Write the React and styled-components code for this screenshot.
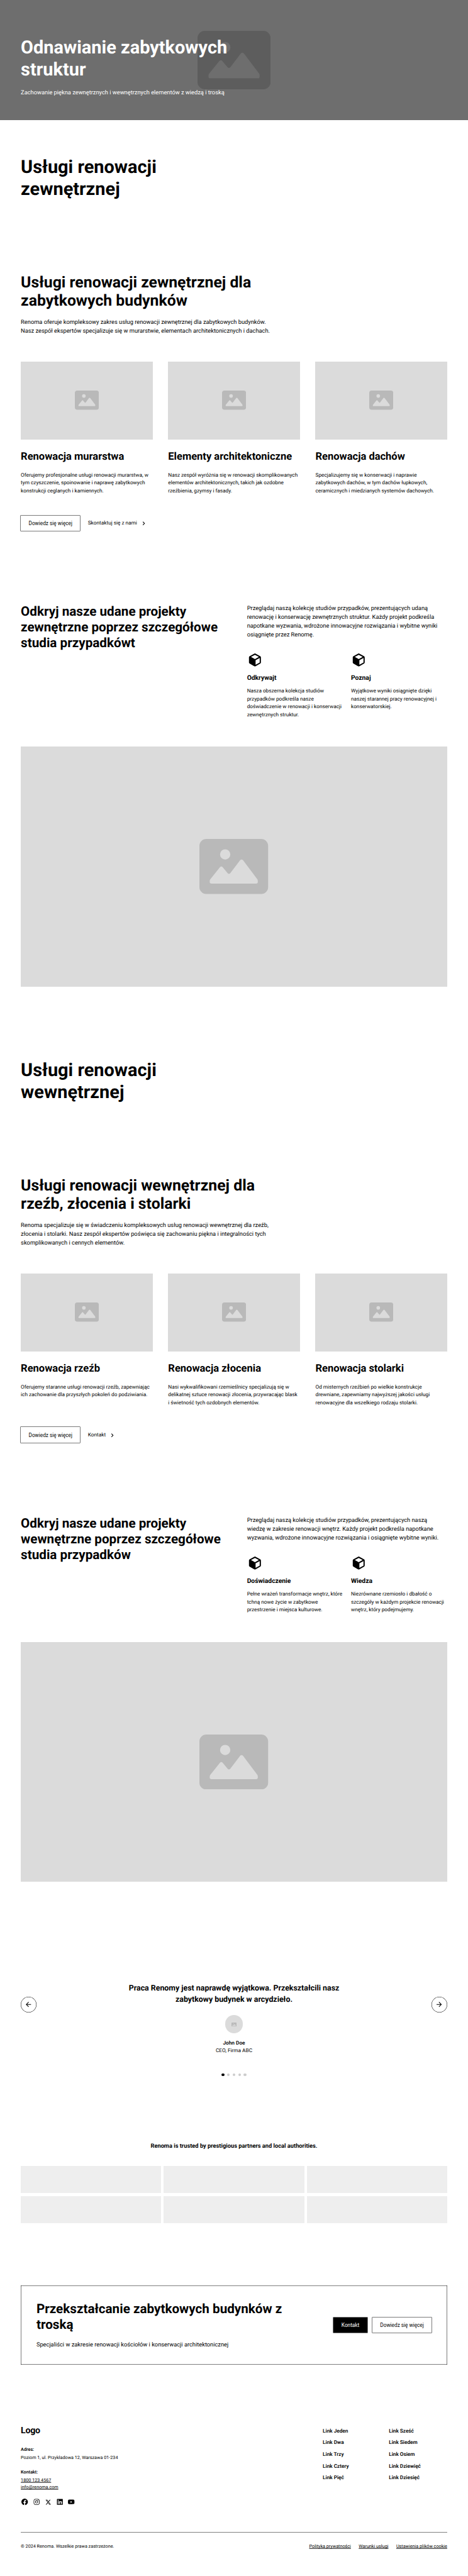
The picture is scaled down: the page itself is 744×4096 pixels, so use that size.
import React from "react";
import styled, { createGlobalStyle, css } from "styled-components";
import {
  BiChevronRight,
  BiLogoFacebookCircle,
  BiLogoInstagram,
  BiLogoLinkedinSquare,
  BiLogoYoutube,
} from "react-icons/bi";
import { FaXTwitter } from "react-icons/fa6";
import { MdArrowBack, MdArrowForward } from "react-icons/md";

/* Sizes are written in design pixels (1440px artboard) and emitted as rem. */
const u = (...px) => px.map((n) => `${n / 16}rem`).join(" ");

const GlobalStyle = createGlobalStyle`
  *, *::before, *::after { box-sizing: border-box; }
  html { font-size: 8.2654px; background: #fff; }
  body {
    margin: 0;
    overflow-x: hidden;
    color: #000;
    font-family: Roboto, "Liberation Sans", sans-serif;
    text-rendering: geometricPrecision;
  }
  h1, h2, h3, h4, p { margin: 0; }
  a { color: inherit; }
`;

const type = (size, line, weight = 400) => css`
  font-size: ${u(size)};
  line-height: ${u(line)};
  font-weight: ${weight};
  white-space: pre;
`;

const settle = css`
  transform: translateY(0.6px);
`;

const Page = styled.main`
  width: ${u(1440)};
  margin: 0 auto;
  min-height: 100vh;
`;

const DisplayHeading = styled.h1`
  ${type(56, 67.2, 700)}
  ${settle}
`;
const SectionHeading = styled.h2`
  ${type(48, 57.6, 700)}
  ${settle}
`;
const MediumHeading = styled.h2`
  ${type(40, 48, 700)}
  ${settle}
`;
const CardHeading = styled.h3`
  ${type(32, 41.6, 700)}
  ${settle}
`;
const SmallHeading = styled.h4`
  ${type(20, 28, 700)}
  ${settle}
`;
const Lead = styled.p`
  ${type(18, 27)}
  ${settle}
`;
const Body = styled.p`
  ${type(16, 24)}
  ${settle}
`;
const Caption = styled.p`
  ${type(14, 21)}
  ${settle}
`;

/* ---------- Hero ---------- */
const Hero = styled.header`
  display: grid;
  height: ${u(369)};
  background: #6e6e6e;
  color: #fff;
`;
const HeroMedia = styled.div`
  grid-area: 1 / 1;
  display: grid;
  place-items: center;
`;
const HeroContent = styled.div`
  grid-area: 1 / 1;
  z-index: 1;
  display: flex;
  flex-direction: column;
  gap: ${u(24)};
  padding: ${u(112, 64, 0)};
`;

/* ---------- Placeholder picture ---------- */
const PictureSvg = styled.svg`
  display: block;
  width: ${({ $width }) => u($width)};
  height: auto;
  fill: ${({ $tone }) => $tone};
`;
const PictureIcon = ({ width, tone = "#b9b9b9" }) => (
  <PictureSvg $width={width} $tone={tone} viewBox="0 0 20 16">
    <path
      fillRule="evenodd"
      d="M2 0H18A2 2 0 0 1 20 2V14A2 2 0 0 1 18 16H2A2 2 0 0 1 0 14V2A2 2 0 0 1 2 0ZM7.5 3A1.5 1.5 0 1 0 7.5 6A1.5 1.5 0 1 0 7.5 3ZM3.15 11.75L6 8.2Q6.37 7.85 6.75 8.2L8.23 9.98Q8.6 10.32 8.97 9.98L11.85 6.2Q12.27 5.78 12.7 6.2L16.85 11.7Q17 11.92 17 12.2V12.5A.5.5 0 0 1 16.5 13H3.5A.5.5 0 0 1 3 12.5V12.2Q3 11.95 3.15 11.75Z"
    />
  </PictureSvg>
);
const Placeholder = styled.div`
  display: grid;
  place-items: center;
  height: ${({ $height }) => u($height)};
  background: #dbdbdb;
`;

/* ---------- Sections ---------- */
const Section = styled.section`
  padding: ${u(112, 64)};
`;
const Intro = styled.div`
  display: flex;
  flex-direction: column;
  gap: ${u(24)};
  margin-bottom: ${u(80)};
`;
const CardGrid = styled.div`
  display: grid;
  grid-template-columns: repeat(3, minmax(0, 1fr));
  column-gap: ${u(48)};
`;
const Card = styled.article`
  display: flex;
  flex-direction: column;
  ${CardHeading} {
    margin: ${u(32, 0, 24)};
  }
`;
const Actions = styled.div`
  display: flex;
  align-items: center;
  gap: ${u(24)};
  height: ${u(49)};
  margin-top: ${u(64)};
`;
const Button = styled.button`
  ${type(16, 24)}
  height: ${u(48)};
  padding: ${u(0, 24)};
  border: 0;
  font-family: inherit;
  color: ${({ $primary }) => ($primary ? "#fff" : "#000")};
  background: ${({ $primary }) => ($primary ? "#000" : "#fff")};
  box-shadow: 0 0 0 ${u(1)} #000;
`;
const TextLink = styled.a`
  ${type(16, 24)}
  display: inline-flex;
  align-items: center;
  gap: ${u(8)};
  svg {
    width: ${u(24)};
    height: ${u(24)};
  }
`;

const TwoColumns = styled.div`
  display: grid;
  grid-template-columns: repeat(2, minmax(0, 1fr));
  column-gap: ${u(80)};
  margin-bottom: ${u(80)};
`;
const FeatureGrid = styled.div`
  display: grid;
  grid-template-columns: repeat(2, minmax(0, 1fr));
  column-gap: ${u(24)};
  margin-top: ${u(32)};
  padding: ${u(8, 0)};
`;
const Feature = styled.div`
  display: flex;
  flex-direction: column;
  gap: ${u(16)};
`;
const CubeSvg = styled.svg`
  display: block;
  width: ${u(48)};
  height: ${u(48)};
`;
const CubeIcon = () => (
  <CubeSvg viewBox="0 0 48 48">
    <path
      fillRule="evenodd"
      d="M22.2 4.4Q23.8 3.6 25.4 4.4L40.4 12.6Q42.2 13.7 42.2 15.6V32.2Q42.2 34.1 40.4 35.1L25.4 43.4Q23.8 44.2 22.2 43.4L7.2 35.1Q5.4 34.1 5.4 32.2V15.6Q5.4 13.7 7.2 12.6ZM23.8 8.1L11.7 14.6L23.8 21.5L35.9 14.6ZM25.8 24.9V38.9L38.4 31.9V17.9Z"
    />
  </CubeSvg>
);

/* ---------- Testimonial ---------- */
const Testimonial = styled.section`
  padding: ${u(199.6, 64, 0)};
`;
const Carousel = styled.div`
  display: flex;
  align-items: flex-start;
  justify-content: space-between;
`;
const RoundButton = styled.button`
  display: grid;
  place-items: center;
  width: ${u(48)};
  height: ${u(48)};
  margin-top: ${u(42)};
  padding: 0;
  border: 0;
  border-radius: 50%;
  background: #fff;
  color: #000;
  box-shadow: inset 0 0 0 ${u(1)} #000;
  svg {
    width: ${u(24)};
    height: ${u(24)};
  }
`;
const Quote = styled.blockquote`
  display: flex;
  flex-direction: column;
  align-items: center;
  margin: 0;
  text-align: center;
`;
const QuoteText = styled.p`
  ${type(24, 33.6, 700)}
  ${settle}
`;
const Avatar = styled.div`
  display: grid;
  place-items: center;
  width: ${u(56)};
  height: ${u(56)};
  margin: ${u(32, 0, 16)};
  border-radius: 50%;
  background: #dbdbdb;
`;
const Author = styled.p`
  ${type(16, 24, 600)}
  ${settle}
`;
const Dots = styled.div`
  display: flex;
  justify-content: center;
  gap: ${u(9)};
  margin-top: ${u(58.8)};
`;
const Dot = styled.span`
  width: ${u(8)};
  height: ${u(8)};
  border-radius: 50%;
  background: ${({ $active }) => ($active ? "#000" : "#ccc")};
`;

/* ---------- Partners ---------- */
const Partners = styled.section`
  padding: ${u(202.2, 64, 192)};
`;
const PartnersTitle = styled.h4`
  ${type(18, 27, 700)}
  ${settle}
  margin-bottom: ${u(48)};
  text-align: center;
`;
const LogoGrid = styled.div`
  display: grid;
  grid-template-columns: repeat(3, minmax(0, 1fr));
  gap: ${u(8)};
`;
const LogoTile = styled.div`
  height: ${u(84)};
  background: #eee;
`;

/* ---------- Call to action ---------- */
const CallToAction = styled.section`
  display: flex;
  align-items: center;
  justify-content: space-between;
  margin: ${u(0, 64)};
  padding: ${u(48)};
  box-shadow: inset 0 0 0 ${u(1)} #000;
`;
const CallText = styled.div`
  display: flex;
  flex-direction: column;
  gap: ${u(24)};
`;
const CallButtons = styled.div`
  display: flex;
  gap: ${u(16)};
`;

/* ---------- Footer ---------- */
const Footer = styled.footer`
  padding: ${u(192, 64, 80)};
`;
const FooterTop = styled.div`
  display: flex;
  justify-content: space-between;
  margin-bottom: ${u(80)};
`;
const Logo = styled.div`
  ${type(27.5, 23, 700)}
  ${settle}
  letter-spacing: -0.02em;
  margin-bottom: ${u(36)};
`;
const ContactBlock = styled.div`
  display: flex;
  flex-direction: column;
  margin-bottom: ${u(24)};
`;
const ContactLabel = styled.p`
  ${type(14, 21, 600)}
  ${settle}
  margin-bottom: ${u(4)};
`;
const SmallLink = styled.a`
  ${type(14, 21)}
  ${settle}
  align-self: flex-start;
  text-decoration: underline;
`;
const Social = styled.div`
  display: flex;
  gap: ${u(12)};
  svg {
    width: ${u(24)};
    height: ${u(24)};
  }
`;
const XBox = styled.span`
  display: grid;
  place-items: center;
  width: ${u(24)};
  height: ${u(24)};
  && svg {
    width: ${u(18)};
    height: ${u(18)};
  }
`;
const FooterLinks = styled.nav`
  display: grid;
  grid-template-columns: repeat(2, ${u(179.5)});
  column-gap: ${u(24)};
`;
const LinkColumn = styled.div`
  display: flex;
  flex-direction: column;
  gap: ${u(12)};
`;
const FooterLink = styled.a`
  ${type(16, 24, 600)}
  ${settle}
`;
const FooterBottom = styled.div`
  display: flex;
  justify-content: space-between;
  padding-top: ${u(33)};
  box-shadow: inset 0 ${u(1)} 0 #000;
`;
const LegalLinks = styled.div`
  display: flex;
  gap: ${u(24)};
`;

const ServiceSection = ({ title, lead, cards, linkText }) => (
  <Section>
    <Intro>
      <SectionHeading>{title}</SectionHeading>
      <Lead>{lead}</Lead>
    </Intro>
    <CardGrid>
      {cards.map(([name, text]) => (
        <Card key={name}>
          <Placeholder $height={240}>
            <PictureIcon width={74} />
          </Placeholder>
          <CardHeading>{name}</CardHeading>
          <Body>{text}</Body>
        </Card>
      ))}
    </CardGrid>
    <Actions>
      <Button>Dowiedz się więcej</Button>
      <TextLink>
        {linkText}
        <BiChevronRight />
      </TextLink>
    </Actions>
  </Section>
);

const CaseSection = ({ title, lead, features }) => (
  <Section>
    <TwoColumns>
      <MediumHeading>{title}</MediumHeading>
      <div>
        <Lead>{lead}</Lead>
        <FeatureGrid>
          {features.map(([name, text]) => (
            <Feature key={name}>
              <CubeIcon />
              <SmallHeading>{name}</SmallHeading>
              <Body>{text}</Body>
            </Feature>
          ))}
        </FeatureGrid>
      </div>
    </TwoColumns>
    <Placeholder $height={738}>
      <PictureIcon width={211.5} />
    </Placeholder>
  </Section>
);

const exteriorCards = [
  ["Renowacja murarstwa", "Oferujemy profesjonalne usługi renowacji murarstwa, w\ntym czyszczenie, spoinowanie i naprawę zabytkowych\nkonstrukcji ceglanych i kamiennych."],
  ["Elementy architektoniczne", "Nasz zespół wyróżnia się w renowacji skomplikowanych\nelementów architektonicznych, takich jak ozdobne\nrzeźbienia, gzymsy i fasady."],
  ["Renowacja dachów", "Specjalizujemy się w konserwacji i naprawie\nzabytkowych dachów, w tym dachów łupkowych,\nceramicznych i miedzianych systemów dachowych."],
];
const interiorCards = [
  ["Renowacja rzeźb", "Oferujemy staranne usługi renowacji rzeźb, zapewniając\nich zachowanie dla przyszłych pokoleń do podziwiania."],
  ["Renowacja złocenia", "Nasi wykwalifikowani rzemieślnicy specjalizują się w\ndelikatnej sztuce renowacji złocenia, przywracając blask\ni świetność tych ozdobnych elementów."],
  ["Renowacja stolarki", "Od misternych rzeźbień po wielkie konstrukcje\ndrewniane, zapewniamy najwyższej jakości usługi\nrenowacyjne dla wszelkiego rodzaju stolarki."],
];
const exteriorFeatures = [
  ["Odkrywajt", "Nasza obszerna kolekcja studiów\nprzypadków podkreśla nasze\ndoświadczenie w renowacji i konserwacji\nzewnętrznych struktur."],
  ["Poznaj", "Wyjątkowe wyniki osiągnięte dzięki\nnaszej starannej pracy renowacyjnej i\nkonserwatorskiej."],
];
const interiorFeatures = [
  ["Doświadczenie", "Pełne wrażeń transformacje wnętrz, które\ntchną nowe życie w zabytkowe\nprzestrzenie i miejsca kulturowe."],
  ["Wiedza", "Niezrównane rzemiosło i dbałość o\nszczegóły w każdym projekcie renowacji\nwnętrz, który podejmujemy."],
];
const linkColumns = [
  ["Link Jeden", "Link Dwa", "Link Trzy", "Link Cztery", "Link Pięć"],
  ["Link Sześć", "Link Siedem", "Link Osiem", "Link Dziewięć", "Link Dziesięć"],
];

export default function App() {
  return (
    <>
      <GlobalStyle />
      <Page>
        <Hero>
          <HeroMedia>
            <PictureIcon width={225} tone="#5d5d5d" />
          </HeroMedia>
          <HeroContent>
            <DisplayHeading>{"Odnawianie zabytkowych\nstruktur"}</DisplayHeading>
            <Lead>Zachowanie piękna zewnętrznych i wewnętrznych elementów z wiedzą i troską</Lead>
          </HeroContent>
        </Hero>

        <Section>
          <DisplayHeading as="h2">{"Usługi renowacji\nzewnętrznej"}</DisplayHeading>
        </Section>
        <ServiceSection
          title={"Usługi renowacji zewnętrznej dla\nzabytkowych budynków"}
          lead={"Renoma oferuje kompleksowy zakres usług renowacji zewnętrznej dla zabytkowych budynków.\nNasz zespół ekspertów specjalizuje się w murarstwie, elementach architektonicznych i dachach."}
          cards={exteriorCards}
          linkText="Skontaktuj się z nami"
        />
        <CaseSection
          title={"Odkryj nasze udane projekty\nzewnętrzne poprzez szczegółowe\nstudia przypadkówt"}
          lead={"Przeglądaj naszą kolekcję studiów przypadków, prezentujących udaną\nrenowację i konserwację zewnętrznych struktur. Każdy projekt podkreśla\nnapotkane wyzwania, wdrożone innowacyjne rozwiązania i wybitne wyniki\nosiągnięte przez Renomę."}
          features={exteriorFeatures}
        />

        <Section>
          <DisplayHeading as="h2">{"Usługi renowacji\nwewnętrznej"}</DisplayHeading>
        </Section>
        <ServiceSection
          title={"Usługi renowacji wewnętrznej dla\nrzeźb, złocenia i stolarki"}
          lead={"Renoma specjalizuje się w świadczeniu kompleksowych usług renowacji wewnętrznej dla rzeźb,\nzłocenia i stolarki. Nasz zespół ekspertów poświęca się zachowaniu piękna i integralności tych\nskomplikowanych i cennych elementów."}
          cards={interiorCards}
          linkText="Kontakt"
        />
        <CaseSection
          title={"Odkryj nasze udane projekty\nwewnętrzne poprzez szczegółowe\nstudia przypadków"}
          lead={"Przeglądaj naszą kolekcję studiów przypadków, prezentujących naszą\nwiedzę w zakresie renowacji wnętrz. Każdy projekt podkreśla napotkane\nwyzwania, wdrożone innowacyjne rozwiązania i osiągnięte wybitne wyniki."}
          features={interiorFeatures}
        />

        <Testimonial>
          <Carousel>
            <RoundButton aria-label="Poprzednia opinia">
              <MdArrowBack />
            </RoundButton>
            <Quote>
              <QuoteText>{"Praca Renomy jest naprawdę wyjątkowa. Przekształcili nasz\nzabytkowy budynek w arcydzieło."}</QuoteText>
              <Avatar>
                <PictureIcon width={16} />
              </Avatar>
              <Author>John Doe</Author>
              <Body>CEO, Firma ABC</Body>
            </Quote>
            <RoundButton aria-label="Następna opinia">
              <MdArrowForward />
            </RoundButton>
          </Carousel>
          <Dots>
            {[0, 1, 2, 3, 4].map((i) => (
              <Dot key={i} $active={i === 0} />
            ))}
          </Dots>
        </Testimonial>

        <Partners>
          <PartnersTitle>Renoma is trusted by prestigious partners and local authorities.</PartnersTitle>
          <LogoGrid>
            {[0, 1, 2, 3, 4, 5].map((i) => (
              <LogoTile key={i} />
            ))}
          </LogoGrid>
        </Partners>

        <CallToAction>
          <CallText>
            <MediumHeading>{"Przekształcanie zabytkowych budynków z\ntroską"}</MediumHeading>
            <Lead>Specjaliści w zakresie renowacji kościołów i konserwacji architektonicznej</Lead>
          </CallText>
          <CallButtons>
            <Button $primary>Kontakt</Button>
            <Button>Dowiedz się więcej</Button>
          </CallButtons>
        </CallToAction>

        <Footer>
          <FooterTop>
            <div>
              <Logo>Logo</Logo>
              <ContactBlock>
                <ContactLabel>Adres:</ContactLabel>
                <Caption>Poziom 1, ul. Przykładowa 12, Warszawa 01-234</Caption>
              </ContactBlock>
              <ContactBlock>
                <ContactLabel>Kontakt:</ContactLabel>
                <SmallLink>1800 123 4567</SmallLink>
                <SmallLink>info@renoma.com</SmallLink>
              </ContactBlock>
              <Social>
                <BiLogoFacebookCircle />
                <BiLogoInstagram />
                <XBox>
                  <FaXTwitter />
                </XBox>
                <BiLogoLinkedinSquare />
                <BiLogoYoutube />
              </Social>
            </div>
            <FooterLinks>
              {linkColumns.map((links) => (
                <LinkColumn key={links[0]}>
                  {links.map((label) => (
                    <FooterLink key={label}>{label}</FooterLink>
                  ))}
                </LinkColumn>
              ))}
            </FooterLinks>
          </FooterTop>
          <FooterBottom>
            <Caption>© 2024 Renoma. Wszelkie prawa zastrzeżone.</Caption>
            <LegalLinks>
              <SmallLink>Polityka prywatności</SmallLink>
              <SmallLink>Warunki usługi</SmallLink>
              <SmallLink>Ustawienia plików cookie</SmallLink>
            </LegalLinks>
          </FooterBottom>
        </Footer>
      </Page>
    </>
  );
}
